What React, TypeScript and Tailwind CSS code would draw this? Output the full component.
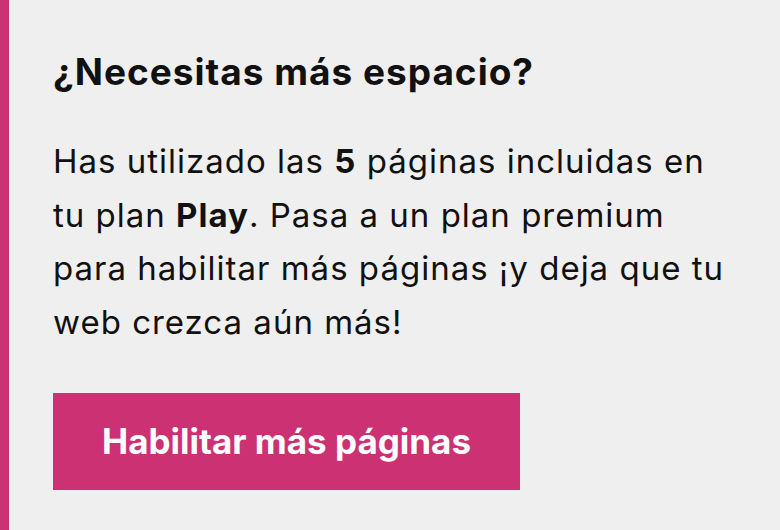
export default function App() {
  return (
    <div
      className="w-[780px] h-[530px] bg-[#efefef] border-l-[9px] border-[#cc3174] pl-[44px] pt-[50px] text-[#111]"
      style={{ fontFamily: 'Inter, "Noto Sans", sans-serif' }}
    >
      <h2 className="text-[37px] font-bold leading-[44px] tracking-[1px]">¿Necesitas más espacio?</h2>
      <p className="mt-[41px] text-[33px] leading-[53.5px] tracking-[1px] whitespace-nowrap">
        Has utilizado las <b>5</b> páginas incluidas en
        <br />
        tu plan <b>Play</b>. Pasa a un plan premium
        <br />
        para habilitar más páginas ¡y deja que tu
        <br />
        web crezca aún más!
      </p>
      <button className="mt-[44px] w-[467px] h-[97px] bg-[#cc3174] text-white text-[35px] font-bold">
        Habilitar más páginas
      </button>
    </div>
  )
}
